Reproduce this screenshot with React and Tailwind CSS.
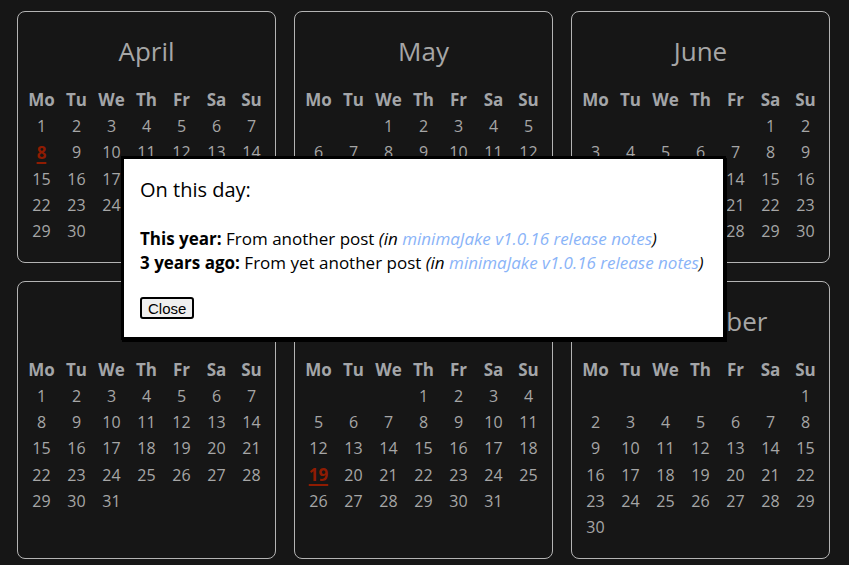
import React from 'react';

const DAY_NAMES = ['Mo', 'Tu', 'We', 'Th', 'Fr', 'Sa', 'Su'];

// 2024, weeks starting on Monday
const MONTHS = [
  { name: 'April', start: 0, days: 30, marked: 8 },
  { name: 'May', start: 2, days: 31 },
  { name: 'June', start: 5, days: 30 },
  { name: 'July', start: 0, days: 31 },
  { name: 'August', start: 3, days: 31, marked: 19 },
  { name: 'September', start: 6, days: 30 },
];

function MonthCard({ month }) {
  const cells = [];
  for (let i = 0; i < month.start; i++) cells.push(null);
  for (let d = 1; d <= month.days; d++) cells.push(d);

  return (
    <div className="border border-[#b4b4b4] rounded-lg pt-[23px] pb-[18px]">
      <h2 className="text-center text-[26px] leading-[32px] text-[#a6a6a6]">{month.name}</h2>
      <div className="grid grid-cols-7 w-[245px] mx-auto mt-[20px]">
        {DAY_NAMES.map((d) => (
          <div key={d} className="h-[26px] flex items-center justify-center font-bold text-[17px] text-[#a3a5a8]">
            {d}
          </div>
        ))}
        {cells.map((d, i) => (
          <div key={i} className="h-[26.25px] flex items-center justify-center">
            {d === month.marked ? (
              <span className="font-bold text-[17px] text-[#8f1c02] underline underline-offset-[3px] decoration-[2px]">{d}</span>
            ) : (
              d
            )}
          </div>
        ))}
      </div>
    </div>
  );
}

export default function App() {
  return (
    <div
      className="relative min-h-[565px] bg-[#161616] text-[#a6a6a6] text-[16px]"
      style={{ fontFamily: '"Open Sans", "Noto Sans", sans-serif' }}
    >
      <div className="grid grid-cols-[repeat(3,259px)] gap-x-[18px] gap-y-[17.5px] pl-[17px] pt-[11px]">
        {MONTHS.map((m) => (
          <MonthCard key={m.name} month={m} />
        ))}
      </div>

      {/* On-this-day dialog */}
      <div className="absolute left-[121px] top-[156px] w-[605px] bg-white text-black border-[3px] border-black shadow-[1px_2px_0_#000] pt-4 px-4 pb-[17px]">
        <p className="text-[20px] leading-[30px]">On this day:</p>
        <div className="mt-[22px] text-[17px] leading-[24px]">
          <div>
            <strong>This year:</strong> From another post{' '}
            <em>
              (in <a className="text-[#8ab4f8]">minimaJake v1.0.16 release notes</a>)
            </em>
          </div>
          <div>
            <strong>3 years ago:</strong> From yet another post{' '}
            <em>
              (in <a className="text-[#8ab4f8]">minimaJake v1.0.16 release notes</a>)
            </em>
          </div>
        </div>
        <button
          type="button"
          className="mt-[22px] h-[22px] px-[6px] bg-[#efefef] border-2 border-black rounded-[3px] text-[15px] leading-none"
          style={{ fontFamily: '"Liberation Sans", Arial, sans-serif' }}
        >
          Close
        </button>
      </div>
    </div>
  );
}
